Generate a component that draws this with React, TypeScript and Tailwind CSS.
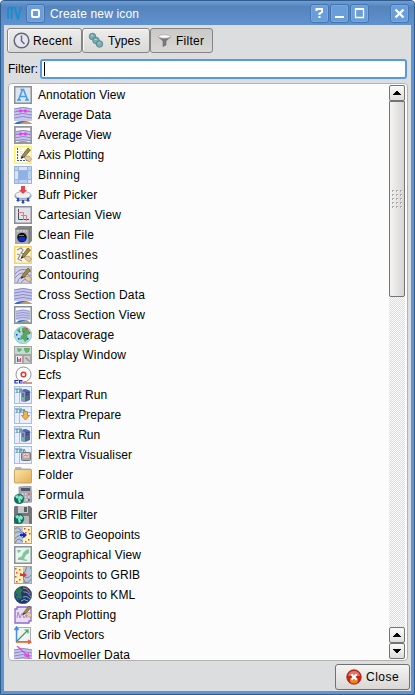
import React, { type ReactNode } from "react";

function Rows({ top = 3 }: { top?: number }) {
  return (
    <g>
      <path d={`M0 ${top + 1} Q9 ${top - 3} 18 ${top + 1} V15 H0Z`} fill="#c6c6ec" />
      <g fill="none" stroke="#8b8bc6" strokeWidth="1">
        {[0, 3, 6, 9].map((d) => (
          <path key={d} d={`M0 ${top + 1 + d} Q9 ${top - 2 + d} 18 ${top + 1 + d}`} />
        ))}
      </g>
    </g>
  );
}

function Ground() {
  return (
    <g>
      <path d="M0 18 Q3 15 9 15 Q15 15 18 18Z" fill="#2a6cba" />
      <path d="M5 18 Q8 15.500 13 15.500 Q16 16 18 18Z" fill="#c79a62" />
    </g>
  );
}

function Frame({ color = "#8b9199", fill = "#dfe3ea" }: { color?: string; fill?: string }) {
  return <rect x="0.75" y="0.75" width="16.500" height="16.500" fill={fill} stroke={color} strokeWidth="1.5" />;
}

function Pencil() {
  return (
    <g>
      <path d="M10 11 L15 10 L17.500 13 L15.500 16 L12 14Z" fill="#e5cba1" stroke="#8d7450" strokeWidth=".5" />
      <path d="M7 12.500 L8.500 9 L14 2 L16.500 4 L11 10.500Z" fill="#a08d42" stroke="#4c4320" strokeWidth=".6" />
      <path d="M7 12.500 L8 10 L9.500 11.500Z" fill="#222" />
    </g>
  );
}

function Pink() {
  return (
    <g fill="#f52bea">
      <path d="M2 4.500 H16 V5.500 H2Z" opacity=".5" />
      <path d="M5.500 3.500 H7.500 V4.500 H8.500 V5.500 H7.500 V6.500 H5.500Z M12.500 3.500 H10.500 V4.500 H9.500 V5.500 H10.500 V6.500 H12.500Z" />
    </g>
  );
}

function Average({ view = false }: { view?: boolean }) {
  return (
    <>
      {view && <Frame fill="#f8f8fc" />}
      <Rows top={view ? 5 : 2} />
      <g transform={view ? "translate(0 3)" : ""}><Pink /></g>
      {!view && <Ground />}
      {view && <path d="M2 16.500 Q9 14 16 16.500Z" fill="#936f55" />}
      {view && <path d="M.75 .75H17.250V17.250H.75Z" fill="none" stroke="#92979e" strokeWidth="1.500" />}
    </>
  );
}

function Server() {
  return (
    <g>
      <path d="M7 5 L12 3 L16 5 V14 L11 16 L7 15Z" fill="#5764a0" />
      <path d="M7 5 L11 6 V16 L7 15Z" fill="#8f9bc6" />
      <path d="M12 7 L15 6 M12 9 L15 8" stroke="#333d76" />
      <path d="M8 8 H10 M8 10 H10" stroke="#3b4779" />
      <rect x="9" y="12" width="2" height="2" fill="#38df38" />
    </g>
  );
}

function Flex({ children }: { children: ReactNode }) {
  return (
    <g>
      <rect x=".5" y=".5" width="17" height="17" fill="#e7efff" stroke="#a9bee6" />
      <path d="M5.500 1 V17 M1 6.500 H17" stroke="#a9bee6" />
      <path d="M1 3 H5 M3 3 V7 M6 7 V3 H8 V5 H6 M9 7 L10 3 L12 7" fill="none" stroke="#4a8d92" strokeWidth="1" />
      {children}
    </g>
  );
}

function Globe({ kml = false }: { kml?: boolean }) {
  return (
    <g>
      <circle cx="9" cy="9" r="8.700" fill={kml ? "#1c3a68" : "#a6e0dd"} stroke={kml ? "#35495b" : "#78bcb3"} strokeWidth=".6" />
      {kml ? (
        <>
          <path d="M2 4 L6 1 L9 4 L7 7 L8 12 L4 15 L1 9Z" fill="#267a4d" />
          <path d="M9 2 Q14 2 16 8 M10 6 Q13 5 17 11 M9 11 Q13 9 16 13 M7 15 Q10 12 14 15" fill="none" stroke="#93a9cc" strokeWidth="1" />
        </>
      ) : (
        <path d="M8 2 L11 1 L15 4 L16 8 L13 9 L14 13 L11 16 L9 13 L6 14 L7 10 L9 8 L8 5Z M3 4L6 2L6 5L4 6Z" fill="#5ba366" />
      )}
      <path d="M12 2h1.500v1.500h-1.500z M15 6h1.500v1.500h-1.500z M9 5h1.500v1.500H9z M5 5h1.500v1.500H5z" fill="#ed2c35" />
      <path d="M2 8h1.500v1.500H2z M4 12h1.500v1.500H4z M13 12h1.500v1.500h-1.500z" fill="#2031d3" />
    </g>
  );
}

function SmallGlobe() {
  return (
    <g>
      <circle cx="5" cy="13" r="4.800" fill="#08765d" stroke="#064b48" strokeWidth=".5" />
      <path d="M1 10 L4 9 L5 11 L3 13Z M6 9 L9 11 L8 14 L6 13 L7 16 L5 17 L4 13Z" fill="#8ce6cf" />
    </g>
  );
}

function PointsHalf({ right }: { right: boolean }) {
  const x = right ? 9 : 0;
  return (
    <g>
      <rect width="18" height="18" fill="#b9c6d7" />
      <path d="M0 4 Q4 -1 7 5 T12 3 T18 5 M0 8 Q5 3 9 9 T18 8 M1 18 Q3 10 8 15 T18 12 M0 14 Q6 5 10 14 T18 16" fill="none" stroke="#6f83a2" />
      <rect x={x} width="9" height="18" fill="#fff0bd" />
      {[[2, 2], [6, 3], [3, 6], [7, 7], [2, 10], [6, 13], [3, 15]].map(([a, b]) => (
        <rect key={`${a}-${b}`} x={x + a - 1} y={b} width="1.500" height="1.500" fill="#f04734" />
      ))}
      <path d="M6 8 H9 V6 L13 9 L9 12 V10 H6Z" fill={right ? "#1421d6" : "#df3535"} />
      <rect x=".5" y=".5" width="17" height="17" fill="none" stroke="#aca896" />
    </g>
  );
}

const glyphs: Record<string, ReactNode> = {
  annotation: <><Frame /><path d="M4.500 14 L8.500 3.500 H9.500 L13.500 14 M6 10.500 H12 M3 14 H7 M11 14 H15 M6.500 3.500 H9" fill="none" stroke="#3f9df5" strokeWidth="1.600" /></>,
  avgData: <Average />,
  avgView: <Average view />,
  axis: <><Frame color="#fff06a" fill="#fffdf0" /><path d="M3.500 2 V15 M3 14.500 H16" stroke="#3550c5" strokeDasharray="2 1" /><path d="M7 3 V13 M11 3 V13 M4 6 H15 M4 10 H15" stroke="#d6d6e5" strokeDasharray="1 1" /><Pencil /></>,
  binning: <g shapeRendering="crispEdges"><rect width="18" height="18" fill="#b8cff1" /><path d="M0 5H5V13H0Z M5 0H13V5H5Z M13 13H18V18H13Z" fill="#d8e6fa" /><path d="M5 5H13V13H5Z" fill="#8eb1e6" /><path d="M.5 .5H17.500V17.500H.5Z M4.500 0V18 M13.500 0V18 M0 4.500H18 M0 13.500H18" fill="none" stroke="#9bb3d8" /></g>,
  bufr: <><path d="M1 9 V11 Q3 15 9 15 Q15 15 17 11 V9" fill="#b7bdc5" stroke="#8b9097" strokeWidth=".7" /><ellipse cx="9" cy="9" rx="8" ry="3.500" fill="#eef0f2" stroke="#8b9097" strokeWidth=".7" /><path d="M7 0H11V4H13L9 8L5 4H7Z" fill="#e5464d" /><path d="M3 12H5V14H6L4 16L2 14H3Z M8 14H10V16H11L9 18L7 16H8Z M13 12H15V14H16L14 16L12 14H13Z" fill="#244bd4" /></>,
  cartesian: <><Frame /><path d="M4.500 3 V13.500 H15" stroke="#434d58" fill="none" /><path d="M4 6.500 H9.500 V14 M7 9.500 H12.500 V15" stroke="#e17882" fill="none" /></>,
  clean: <><path d="M1 3 L4 0 H18 V15 L15 18 H1Z" fill="#85878a" /><path d="M1 3H15V18H1Z" fill="#aaabad" /><path d="M1 3H15 L18 0 M15 3V18" stroke="#6b6c6e" strokeWidth=".7" fill="none" /><path d="M3 5H13" stroke="#ececec" strokeDasharray="2 1" /><circle cx="8" cy="11.500" r="4.800" fill="#111" /><ellipse cx="8" cy="13" rx="3.500" ry="2.300" fill="#092cda" /><path d="M5 9.500H10" stroke="#708290" /></>,
  coast: <><Frame color="#f7d36d" fill="#fff6d8" /><path d="M3 4 L7 2 L9 4 L7 7 L11 8 M12 3 L15 4 M3 8 L6 9 L4 13 L8 15" stroke="#8790b8" fill="none" strokeWidth="1.200" /><Pencil /></>,
  contour: <><Frame color="#b7b7c0" fill="#d4d4e2" /><path d="M1 8Q7 0 17 6 M1 12Q7 3 17 10 M3 17Q7 6 15 13 M7 17Q10 10 17 17" stroke="#8285ca" fill="none" /><Pencil /></>,
  crossData: <><Rows top={3} /><Ground /></>,
  crossView: <><Frame fill="#f8f9ff" /><g transform="translate(2 2) scale(.78 .8)"><Rows top={3} /><Ground /></g></>,
  coverage: <Globe />,
  display: <><rect width="18" height="18" fill="#a4a6a6" /><rect x="1" y="1" width="16" height="7" fill="#c2dccf" /><path d="M3 2L8 3L7 5L4 6Z M10 2L16 2L15 6L12 7L10 4Z" fill="#68b070" /><rect x="2" y="10" width="6" height="7" fill="#e8e8f3" /><path d="M3.500 11V16 M5 13V16" stroke="#4551cf" /><path d="M6.500 12V16" stroke="#e34444" /><rect x="10" y="10" width="6" height="7" fill="#ccc" /><path d="M11 12H13V14H15V16" stroke="#888" fill="none" /></>,
  ecfs: <><circle cx="9.500" cy="8.500" r="7.500" fill="#fff" stroke="#777" strokeWidth=".8" /><path d="M9 17H18" stroke="#ad281f" /><circle cx="9.500" cy="8.500" r="2.300" fill="#fff" stroke="#e8362c" strokeWidth="1.500" /><path d="M4 14.500H1V17H4 M8.500 14.500H5.500V17H8.500" fill="none" stroke="#1827bb" strokeWidth="1.200" /></>,
  server: <Flex><Server /></Flex>,
  prepare: <Flex><path d="M9.500 5.500H13.500V9.500H15.500L11.500 14L7.500 9.500H9.500Z" fill="#efb34c" stroke="#c28c38" /></Flex>,
  visual: <Flex><rect x="7.500" y="6.500" width="9" height="8" rx="1" fill="#a5a9ae" stroke="#74777a" /><rect x="9.500" y="7.500" width="5.500" height="4" fill="#f8dada" /><path d="M10 10.500L11.500 8.500L13 10.500L14.500 8.500" stroke="#e43b35" fill="none" strokeWidth=".8" /></Flex>,
  folder: <><defs><linearGradient id="folderFill" x1="0" y1="0" x2="1" y2="1"><stop stopColor="#fae4ab" /><stop offset="1" stopColor="#e4ae51" /></linearGradient></defs><path d="M1 4V1H7L8 2.500H17V5Z" fill="#b5b6b5" /><rect x=".5" y="3.500" width="17" height="13.500" rx=".5" fill="url(#folderFill)" stroke="#cba363" /></>,
  formula: <><path d="M5 1L17 0L18 16L5 17Z" fill="#a9a9b1" stroke="#8c8c95" strokeWidth=".7" /><rect x="7" y="2" width="9" height="3" fill="#50556a" /><path d="M8 8H16 M8 11H16 M9 14H16" stroke="#dedee8" strokeWidth="1.500" strokeDasharray="1.500 1.500" /><path d="M14 8H16" stroke="#ec4c46" strokeWidth="1.500" /><path d="M11 14H13" stroke="#efdb44" strokeWidth="1.500" /><path d="M14 14H16" stroke="#474fd8" strokeWidth="1.500" /><SmallGlobe /></>,
  gribFilter: <><path d="M1 0H16L18 2V18H0V1Z" fill="#737679" /><rect x="4" y="0" width="10" height="7" fill="#c6c8ca" /><rect x="10" y="1" width="3" height="5" fill="#5c5f62" /><rect x="4" y="10" width="11" height="8" fill="#b6b7b7" /><SmallGlobe /></>,
  toPoints: <PointsHalf right />,
  geographical: <><Frame fill="#e9f4ee" /><path d="M3 4L7 4L6 6L4 7Z M9 7L12 4L15 3V7L12 9L10 13L14 14L12 15L7 14L4 14L4 12L8 10Z" fill="#83c69c" /></>,
  toGrib: <PointsHalf right={false} />,
  kml: <Globe kml />,
  graph: <><path d="M1 3H3V1H17V15H15V17H1Z" fill="#e4dff2" stroke="#9167c5" strokeWidth="1.300" /><path d="M3 12L4 6L6 12L8 7L10 12L12 9L13 12" stroke="#c57aca" fill="none" /><g transform="translate(3 -2) scale(.85)"><Pencil /></g></>,
  vectors: <><rect x="2.500" y="1.500" width="14" height="14" fill="#f1f1f4" stroke="#aaaab0" /><path d="M2.500 16V2 M.5 4L2.500 1L4.500 4" stroke="#3f8ee8" fill="none" strokeWidth="1.500" /><path d="M3 15L14 4 M10.500 4H14V7.500" stroke="#35a355" fill="none" strokeWidth="1.200" /><path d="M2 16H17 M14 14L17 16L14 18" stroke="#ec5a2f" fill="none" strokeWidth="1.300" /></>,
  hovmoeller: <><Rows top={3} /><path d="M3 0L14 10 M10 9.500L15 11L14 7" stroke="#ef38e3" fill="none" strokeWidth="1.200" /></>,
};

const items: [string, string, number][] = [
  ["Annotation View", "annotation", 87], ["Average Data", "avgData", 73], ["Average View", "avgView", 73],
  ["Axis Plotting", "axis", 66], ["Binning", "binning", 42], ["Bufr Picker", "bufr", 59],
  ["Cartesian View", "cartesian", 83], ["Clean File", "clean", 56], ["Coastlines", "coast", 60],
  ["Contouring", "contour", 61], ["Cross Section Data", "crossData", 107], ["Cross Section View", "crossView", 107],
  ["Datacoverage", "coverage", 76], ["Display Window", "display", 88], ["Ecfs", "ecfs", 23],
  ["Flexpart Run", "server", 69], ["Flextra Prepare", "prepare", 83], ["Flextra Run", "server", 62],
  ["Flextra Visualiser", "visual", 94], ["Folder", "folder", 35], ["Formula", "formula", 46],
  ["GRIB Filter", "gribFilter", 59], ["GRIB to Geopoints", "toPoints", 102], ["Geographical View", "geographical", 103],
  ["Geopoints to GRIB", "toGrib", 102], ["Geopoints to KML", "kml", 97], ["Graph Plotting", "graph", 78],
  ["Grib Vectors", "vectors", 66], ["Hovmoeller Data", "hovmoeller", 92],
];

/* Spreads the glyphs of a label so it fills the given width. */
function Fit({ text, width }: { text: string; width: number }) {
  const ref = React.useRef<HTMLSpanElement>(null);
  const [gap, setGap] = React.useState(0);
  React.useLayoutEffect(() => {
    if (ref.current) setGap((width + 0.2 - ref.current.getBoundingClientRect().width) / text.length);
  }, [text, width]);
  return <span ref={ref} className="whitespace-pre" style={{ letterSpacing: gap }}>{text}</span>;
}

function TitleButton({ children, className = "" }: { children: ReactNode; className?: string }) {
  return (
    <span className={`flex h-[19px] w-[19px] shrink-0 items-center justify-center rounded-[3px] border border-[#4675ad] bg-[#6a9edb] shadow-[inset_0_0_0_1px_#78a9e1] ${className}`}>
      <svg width="17" height="17" viewBox="0 0 17 17" fill="none" stroke="white" strokeWidth="2">{children}</svg>
    </span>
  );
}

function Tool({ children, className }: { children: ReactNode; className: string }) {
  return <button className={`flex h-[25px] shrink-0 items-center rounded-[3px] border border-[#858585] ${className}`}>{children}</button>;
}

function Arrow({ down = false }: { down?: boolean }) {
  return (
    <button className="flex h-4 w-4 shrink-0 items-center justify-center rounded-[2px] border border-[#747474] bg-gradient-to-b from-[#fafafa] to-[#dededc]">
      <svg width="8" height="4" viewBox="0 0 8 4" shapeRendering="crispEdges" className={down ? "rotate-180" : ""}><path d="M3 0H5V1H6V2H7V3H8V4H0V3H1V2H2V1H3Z" /></svg>
    </button>
  );
}

export default function App() {
  return (
    <div className="flex h-[695px] w-[415px] flex-col overflow-hidden rounded-t-[4px] border border-[#315d8c] bg-[#5e94d2] font-['Liberation_Sans',Arial,sans-serif] text-[12px] leading-5 text-black">
      <header className="flex h-6 shrink-0 items-center bg-gradient-to-b from-[#6c9edb] via-[#5584bb] via-25% to-[#5f92d0] pl-[5px] pr-[5px] pt-px">
        <svg width="18" height="18" viewBox="0 0 18 18" fill="none" stroke="#118fd2" strokeWidth="1.700"><path d="M2 14V5Q2 2.500 4 2.500Q5.500 2.500 5.500 5V14 M5.500 5Q5.500 2.500 7.500 2.500Q9 2.500 9.500 5L12 14.500L15 2" /></svg>
        <TitleButton className="ml-[2px]"><rect x="5" y="5" width="7" height="7" rx="1" /></TitleButton>
        <span className="ml-[5px] mt-px text-white"><Fit text="Create new icon" width={89} /></span>
        <TitleButton className="ml-auto"><path d="M5.500 6V4H11V7L8.500 8.500V10 M8.500 11V13" /></TitleButton>
        <TitleButton className="ml-px"><path d="M4 12H13" /></TitleButton>
        <TitleButton className="ml-px"><path d="M4.500 4H12.500V12.500H4.500Z" strokeWidth="1.300" /><path d="M4 4H13" /></TitleButton>
        <TitleButton className="ml-[21px]"><path d="M4.500 4.500L12.500 12.500M12.500 4.500L4.500 12.500" strokeWidth="2.300" /></TitleButton>
      </header>
      <main className="mx-[3px] mb-[3px] flex min-h-0 flex-1 flex-col bg-[#dcdddf]">
        <div className="flex pl-[3px] pt-[3px]">
          <Tool className="w-[75px] bg-gradient-to-b from-[#ededec] to-[#d9d9d8] pl-[5px] shadow-[inset_1px_1px_0_#fafafa]">
            <svg width="17" height="17" viewBox="0 0 17 17"><circle cx="8.500" cy="8.500" r="7.300" fill="#e5e7ef" stroke="#60667b" strokeWidth="1.500" /><path d="M8.500 3.500V9L11.500 12" fill="none" stroke="#656b7d" strokeWidth="1.500" /></svg>
            <span className="ml-[3px]"><Fit text="Recent" width={39} /></span>
          </Tool>
          <Tool className="w-[68px] bg-gradient-to-b from-[#ededec] to-[#d9d9d8] pl-[5px] shadow-[inset_1px_1px_0_#fafafa]">
            <svg width="17" height="17" viewBox="0 0 17 17" fill="#78adb2" stroke="#527f85" strokeWidth=".8"><circle cx="4.500" cy="4.500" r="3.300" /><circle cx="8" cy="8.500" r="3.300" /><circle cx="11.500" cy="12" r="3.300" /><path d="M3 3.500H5M6.500 7.500H8.500M10 11H12" stroke="#c4e0e2" /></svg>
            <span className="ml-[3px]"><Fit text="Types" width={32} /></span>
          </Tool>
          <Tool className="w-[63px] bg-gradient-to-b from-[#cbc9c7] to-[#dad8d6] pl-[5px]">
            <svg width="17" height="17" viewBox="0 0 17 17"><path d="M2.500 5L7 9V14.500L10 13V9L14.500 5Z" fill="#77797b" stroke="#686a6c" strokeWidth=".6" /><ellipse cx="8.500" cy="4.500" rx="6" ry="1.700" fill="#fff" stroke="#a2a2a2" strokeWidth=".7" /></svg>
            <span className="ml-[3px]"><Fit text="Filter" width={28} /></span>
          </Tool>
        </div>
        <label className="mt-1.5 flex h-5 items-center pl-1 pr-1">
          <span className="w-8 shrink-0"><Fit text="Filter:" width={30} /></span>
          <span className="flex h-5 flex-1 items-center rounded-[3px] border-2 border-[#579ae0] bg-white pl-0.5"><span className="h-[14px] w-px bg-black" /></span>
        </label>
        <section className="ml-1 mr-[3px] mt-1 flex h-[578px] overflow-hidden rounded-sm border border-[#b2b3b1] bg-[#fcfcfc] pb-px pr-px pt-px">
          <ul className="flex-1 overflow-hidden pl-[5px]">
            {items.map(([name, glyph, width]) => (
              <li key={name} className="flex h-5 items-center">
                <svg width="18" height="18" viewBox="0 0 18 18" className="mr-1.5 shrink-0">{glyphs[glyph]}</svg>
                <Fit text={name} width={width} />
              </li>
            ))}
          </ul>
          <div className="mr-px flex w-4 flex-col bg-[repeating-conic-gradient(#dedede_0%_25%,#fafafa_0%_50%)] bg-[length:2px_2px]">
            <Arrow />
            <div className="flex h-[196px] items-center justify-center rounded-b-[2px] border border-[#747474] bg-gradient-to-r from-[#f4f3f1] to-[#d7d6d4]">
              <svg width="11" height="19" viewBox="0 0 11 19" shapeRendering="crispEdges">
                {[0, 4, 8].map((x) => [0, 4, 8, 12, 16].map((y) => <g key={`${x}-${y}`}><path d={`M${x} ${y}h2v1h-1v1h-1z`} fill="#aaa" /><path d={`M${x + 1} ${y + 1}h1v1h-1z`} fill="#fff" /></g>))}
              </svg>
            </div>
            <div className="flex-1" />
            <Arrow /><Arrow down />
          </div>
        </section>
        <footer className="mt-[3px] flex justify-end pr-px">
          <button className="flex h-[26px] w-[75px] items-center rounded-[3px] border border-[#727272] bg-gradient-to-b from-[#f4f4f3] to-[#d8d7d5] pl-2.5">
            <svg width="16" height="16" viewBox="0 0 16 16"><circle cx="8" cy="8" r="7.300" fill="#c4261a" stroke="#9d2219" strokeWidth=".7" /><path d="M2 7Q3 2 8 2T14 7Q8 6 2 7" fill="#e07468" /><ellipse cx="8" cy="11.500" rx="4" ry="3" fill="#f28216" /><path d="M5.300 5.300L10.700 10.700M10.700 5.300L5.300 10.700" stroke="white" strokeWidth="2.300" /></svg>
            <span className="ml-1"><Fit text="Close" width={33} /></span>
          </button>
        </footer>
      </main>
    </div>
  );
}
